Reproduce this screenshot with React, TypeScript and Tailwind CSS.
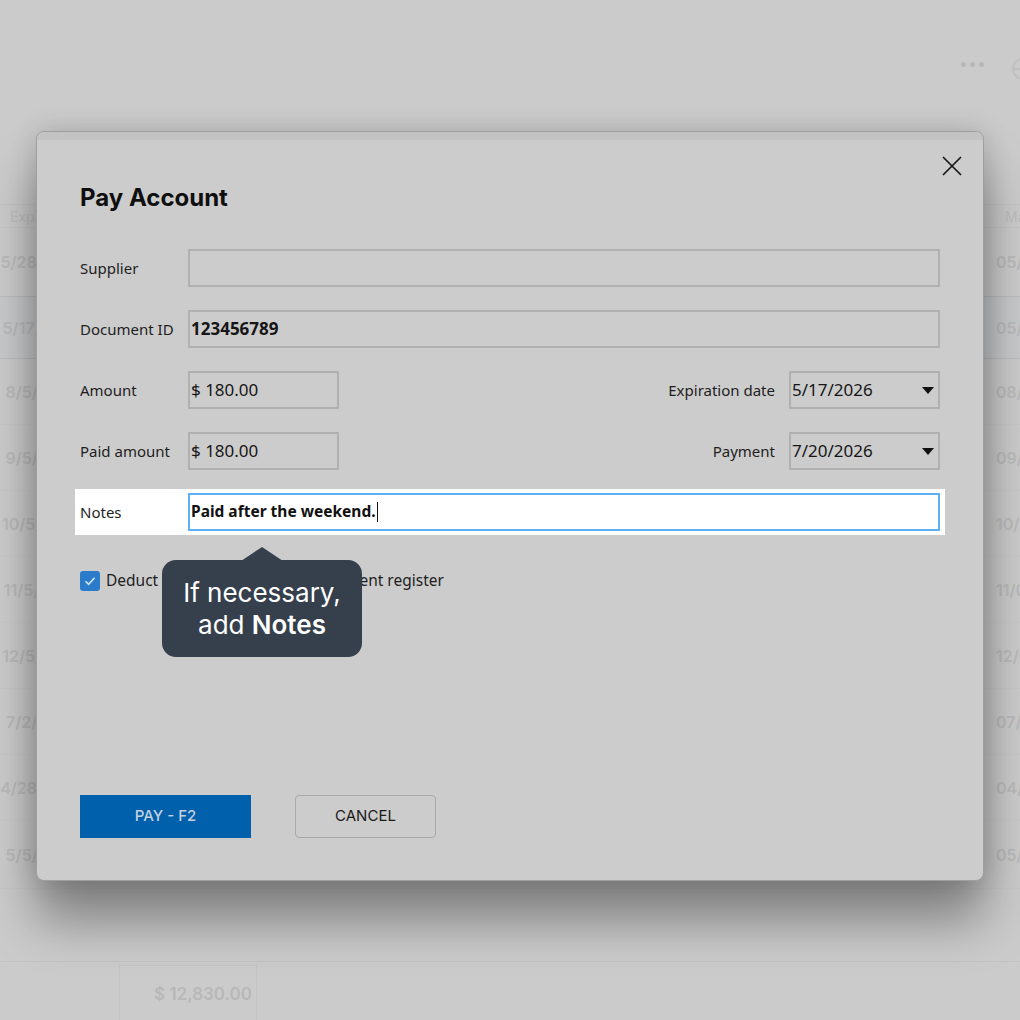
import React from "react";

const rows = [
  { left: "5/28/2026", right: "05/28/2026", h: "h-[69px]" },
  { left: "5/17/2026", right: "05/17/2026", h: "h-[62px]", selected: true },
  { left: "8/5/2026", right: "08/05/2026", h: "h-[66px]" },
  { left: "9/5/2026", right: "09/05/2026", h: "h-[66px]" },
  { left: "10/5/2026", right: "10/05/2026", h: "h-[66px]" },
  { left: "11/5/2026", right: "11/05/2026", h: "h-[66px]" },
  { left: "12/5/2026", right: "12/05/2026", h: "h-[66px]" },
  { left: "7/2/2026", right: "07/02/2026", h: "h-[66px]" },
  { left: "4/28/2026", right: "04/28/2026", h: "h-[66px]" },
  { left: "5/5/2026", right: "05/05/2026", h: "h-[68px]" },
];

const uiFont = { fontFamily: '"Noto Sans", "Open Sans", sans-serif' };

function Caret() {
  return (
    <svg width="12" height="7" viewBox="0 0 12 7" className="shrink-0">
      <path d="M0 0h12L6 7z" fill="#111" />
    </svg>
  );
}

function Label({ children, className = "" }: { children: React.ReactNode; className?: string }) {
  return <span className={`text-[15px] text-[#1e1e1e] ${className}`}>{children}</span>;
}

function Field({ children, className = "" }: { children?: React.ReactNode; className?: string }) {
  return (
    <div className={`h-[38px] border-2 border-[#b0b0b0] flex items-center pl-[1px] pr-[3px] text-[17px] text-[#161616] ${className}`}>
      {children}
    </div>
  );
}

function DateSelect({ value }: { value: string }) {
  return (
    <Field className="w-[151px] justify-between pr-[4px]">
      <span>{value}</span>
      <Caret />
    </Field>
  );
}

export default function App() {
  return (
    <div
      className="relative w-[1020px] h-[1020px] overflow-hidden bg-[#cbcbcb]"
      style={{ fontFamily: 'Inter, "Noto Sans", sans-serif' }}
    >
      {/* page behind the dialog */}
      <div className="flex flex-col h-full">
        <div className="h-[204px] shrink-0 flex justify-end items-start pt-[58px]">
          <div className="flex items-center gap-[4px] mr-[28px] mt-[4px]">
            <span className="w-[5px] h-[5px] rounded-full bg-[#b8b8b8]" />
            <span className="w-[5px] h-[5px] rounded-full bg-[#b8b8b8]" />
            <span className="w-[5px] h-[5px] rounded-full bg-[#b8b8b8]" />
          </div>
          <div className="w-[22px] h-[22px] rounded-full border-2 border-[#c0c0c0] -mr-[14px] flex items-center">
            <div className="w-full h-[2px] bg-[#c0c0c0]" />
          </div>
        </div>

        <div className="h-[24px] shrink-0 flex justify-between items-center border-y border-[#c4c4c4] text-[14px] text-[#bdbdbd]">
          <span className="pl-[10px]">Expiration</span>
          <span className="w-[15px] overflow-hidden">Maturity</span>
        </div>

        {rows.map((r) => (
          <div
            key={r.left}
            className={`${r.h} shrink-0 flex justify-between items-center border-b text-[16px] font-semibold text-[#bababa] ${
              r.selected || r.left === "5/28/2026" ? "border-[#bcbcbc]" : "border-[#c8c8c8]"
            } ${r.selected ? "bg-[#c7c9cb]" : ""}`}
          >
            <span className="w-[84px] text-center whitespace-nowrap">{r.left}</span>
            <span className="w-[24px] overflow-hidden whitespace-nowrap">{r.right}</span>
          </div>
        ))}

        <div className="flex-1" />
        <div className="h-[59px] shrink-0 border-t border-[#c3c3c3] pt-[3px]">
          <div className="ml-[119px] w-[138px] h-[60px] border border-[#c4c4c4] flex items-center justify-end pr-[4px] text-[17px] font-semibold text-[#b8b8b8]">
            $ 12,830.00
          </div>
        </div>
      </div>

      {/* Pay Account dialog */}
      <div className="absolute left-[36px] top-[131px] w-[948px] h-[750px] rounded-[8px] border border-[#9f9f9f] bg-[#cccccc] shadow-[0_40px_50px_rgba(0,0,0,0.36),0_0_28px_rgba(0,0,0,0.16)] flex flex-col">
        <div className="h-[8px] shrink-0 rounded-t-[8px] bg-[#c3c3c3]" />

        <div className="relative flex-1 flex flex-col px-[43px]" style={uiFont}>
          <button className="absolute right-[20px] top-[15px] w-[22px] h-[22px] flex items-center justify-center">
            <svg width="20" height="20" viewBox="0 0 20 20">
              <path d="M1 1L19 19M19 1L1 19" stroke="#151515" strokeWidth="1.7" />
            </svg>
          </button>

          <h2
            className="mt-[43px] text-[24px] font-bold text-[#0f0f0f] leading-[30px]"
            style={{ fontFamily: 'Inter, "Noto Sans", sans-serif' }}
          >
            Pay Account
          </h2>

          <div className="mt-[36px] flex flex-col gap-[23px]">
            <div className="flex items-center">
              <Label className="w-[108px]">Supplier</Label>
              <Field className="flex-1" />
            </div>

            <div className="flex items-center">
              <Label className="w-[108px]">Document ID</Label>
              <Field className="flex-1 font-bold text-[16px]">123456789</Field>
            </div>

            <div className="flex items-center justify-between">
              <div className="flex items-center">
                <Label className="w-[108px]">Amount</Label>
                <Field className="w-[151px]">$ 180.00</Field>
              </div>
              <div className="flex items-center gap-[14px]">
                <Label>Expiration date</Label>
                <DateSelect value="5/17/2026" />
              </div>
            </div>

            <div className="flex items-center justify-between">
              <div className="flex items-center">
                <Label className="w-[108px]">Paid amount</Label>
                <Field className="w-[151px]">$ 180.00</Field>
              </div>
              <div className="flex items-center gap-[14px]">
                <Label>Payment</Label>
                <DateSelect value="7/20/2026" />
              </div>
            </div>

            {/* highlighted notes row */}
            <div className="relative -mx-[5px] -my-[4px] px-[5px] py-[4px] bg-white flex items-center">
              <Label className="w-[108px]">Notes</Label>
              <div className="flex-1 h-[38px] border-2 border-[#5fb0f2] bg-white flex items-center pl-[1px] text-[15.5px] font-bold text-[#111]">
                Paid after the weekend.
                <span className="ml-[1px] w-[1px] h-[20px] bg-[#111]" />
              </div>

              <div className="absolute left-[87px] top-[71px] z-10">
                <div className="absolute left-[79px] -top-[13px] w-0 h-0 border-x-[21px] border-x-transparent border-b-[14px] border-b-[#363f4c]" />
                <div
                  className="w-[200px] h-[97px] rounded-[14px] bg-[#363f4c] flex flex-col items-center justify-center text-[26px] leading-[32px] text-white"
                  style={{ fontFamily: 'Inter, sans-serif', fontWeight: 400 }}
                >
                  <span>If necessary,</span>
                  <span>
                    add <b className="font-semibold">Notes</b>
                  </span>
                </div>
              </div>
            </div>
          </div>

          <label className="mt-[38px] flex items-center gap-[6px]">
            <span className="w-[20px] h-[20px] rounded-[3px] bg-[#2a7ccb] flex items-center justify-center">
              <svg width="14" height="14" viewBox="0 0 14 14">
                <path d="M2.5 7.3L5.6 10.3L11.6 3.8" fill="none" stroke="#d6e4f2" strokeWidth="1.6" />
              </svg>
            </span>
            <span className="text-[15.5px] text-[#1e1e1e]">Deduct the amount from the payment register</span>
          </label>

          <div className="mt-auto mb-[42px] flex items-center gap-[44px]">
            <button
              className="w-[171px] h-[43px] bg-[#0060ab] text-[15px] font-medium text-[#c4d1de]"
              style={{ fontFamily: 'Inter, sans-serif' }}
            >
              PAY - F2
            </button>
            <button
              className="w-[141px] h-[43px] rounded-[4px] border border-[#a9a9a9] text-[15px] text-[#1a1a1a]"
              style={{ fontFamily: 'Inter, sans-serif' }}
            >
              CANCEL
            </button>
          </div>
        </div>
      </div>
    </div>
  );
}
